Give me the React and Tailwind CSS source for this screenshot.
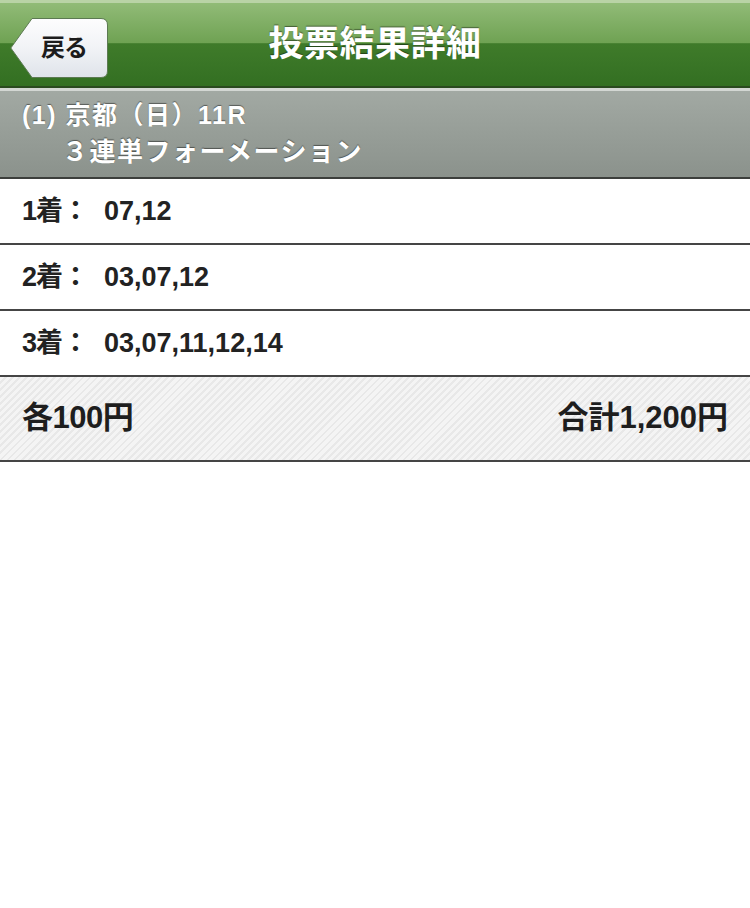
import React from 'react';

const rows = [
  { label: '1着：', nums: '07,12' },
  { label: '2着：', nums: '03,07,12' },
  { label: '3着：', nums: '03,07,11,12,14' },
];

const BackButton = () => (
  <button className="absolute left-[10px] top-[15px] w-[98px] h-[60px] flex items-center justify-center pl-[10px]">
    <svg className="absolute inset-0" width="98" height="60" viewBox="0 0 98 60">
      <defs>
        <linearGradient id="bk" x1="0" y1="0" x2="0" y2="1">
          <stop offset="0" stopColor="#fdfdfe" />
          <stop offset="0.5" stopColor="#f1f3f6" />
          <stop offset="1" stopColor="#dfe3ea" />
        </linearGradient>
      </defs>
      <path d="M22 0.5 H91 Q97.5 0.5 97.5 7 V53 Q97.5 59.5 91 59.5 H22 L0.8 30 Z" fill="url(#bk)" stroke="#5c7a52" strokeWidth="1" />
    </svg>
    <span className="relative text-[24px] font-bold text-[#1c1c1c] tracking-[-1px]">戻る</span>
  </button>
);

export default function App() {
  return (
    <div className="w-[750px] min-h-[908px] bg-white font-['Liberation_Sans','Noto_Sans_CJK_JP',sans-serif]">
      <header className="relative h-[88px] flex items-center justify-center border-t-[3px] border-[#b9d3a6] border-b-2 border-b-[#2a4a1f] bg-[linear-gradient(180deg,#91bb77_0%,#6fa253_48%,#3f7b2a_49%,#336f22_100%)]">
        <BackButton />
        <h1 className="text-[35px] font-bold text-white tracking-[0.5px] [text-shadow:0_-1px_1px_rgba(0,0,0,0.45)]">投票結果詳細</h1>
      </header>
      <div className="h-[3px] bg-[#d3d7d3]" />
      <section className="h-[88px] px-[22px] flex flex-col justify-center bg-[linear-gradient(180deg,#a2a9a3_0%,#8b928c_100%)] border-b-2 border-[#3c3f3c] text-white font-bold leading-[37px] [text-shadow:0_-1px_1px_rgba(0,0,0,0.45)]">
        <p className="text-[25px] tracking-[1.5px]">(1) 京都（日）11R</p>
        <p className="pl-[40px] text-[26px] tracking-[1.5px]">３連単フォーメーション</p>
      </section>
      {rows.map((r) => (
        <div key={r.label} className="h-[66px] flex items-center px-[22px] border-b-2 border-[#454545] text-[27px] font-bold text-[#222]">
          <span className="w-[82px] tracking-[-1px]">{r.label}</span>
          <span>{r.nums}</span>
        </div>
      ))}
      <div className="h-[85px] flex items-center justify-between px-[22px] border-b-2 border-[#454545] text-[31px] font-bold text-[#1e1e1e] bg-[repeating-linear-gradient(135deg,#f4f4f4_0px,#f4f4f4_3px,#e8e8e8_3px,#e8e8e8_5px)]">
        <span className="tracking-[-0.5px]">各100円</span>
        <span>合計1,200円</span>
      </div>
    </div>
  );
}
